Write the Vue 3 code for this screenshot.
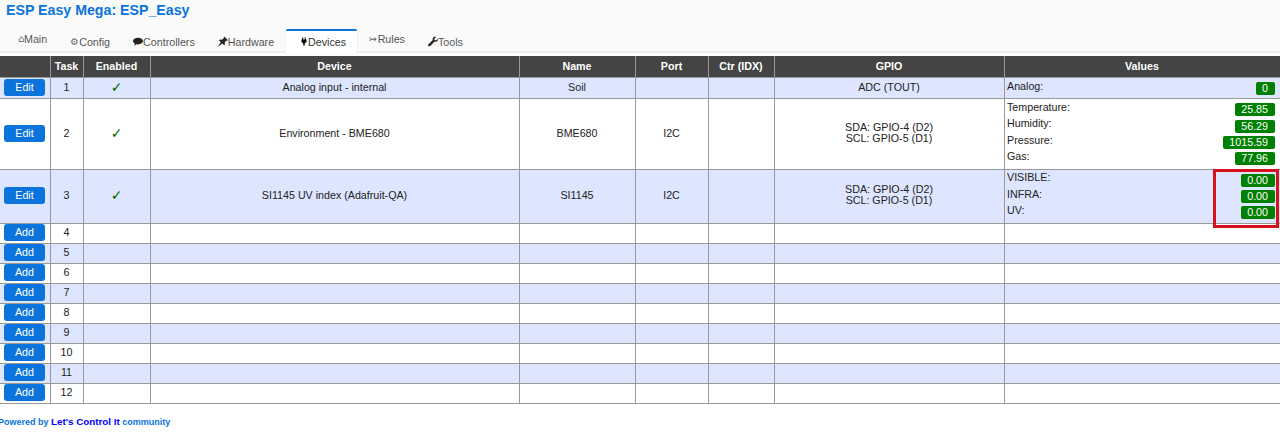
<template>
  <div class="page">
    <header class="top">
      <h1>ESP Easy Mega: ESP_Easy</h1>
      <nav class="tabs">
        <a
          v-for="tab in tabs"
          :key="tab.label"
          class="tab"
          :class="{ active: tab.label === 'Devices', lifted: tab.lifted }"
        >
          <span v-if="tab.glyph" class="glyph" :style="{ width: tab.w + 'px' }">{{ tab.glyph }}</span>
          <svg v-else class="icon" :style="{ width: tab.w + 'px' }" viewBox="0 0 16 16" aria-hidden="true">
            <path :d="tab.icon" />
          </svg>
          <span>{{ tab.label }}</span>
        </a>
      </nav>
    </header>

    <table class="devices">
      <colgroup>
        <col v-for="w in colWidths" :key="w.id" :style="{ width: w.px + 'px' }" />
      </colgroup>
      <thead>
        <tr>
          <th></th>
          <th>Task</th>
          <th>Enabled</th>
          <th>Device</th>
          <th>Name</th>
          <th>Port</th>
          <th>Ctr (IDX)</th>
          <th>GPIO</th>
          <th>Values</th>
        </tr>
      </thead>
      <tbody>
        <tr v-for="row in rows" :key="row.task">
          <td class="btn-cell">
            <button class="btn">{{ row.device ? 'Edit' : 'Add' }}</button>
          </td>
          <td>{{ row.task }}</td>
          <td><span v-if="row.device" class="check">✓</span></td>
          <td>{{ row.device }}</td>
          <td>{{ row.name }}</td>
          <td>{{ row.port }}</td>
          <td></td>
          <td>
            <div v-for="g in row.gpio" :key="g" class="gpio">{{ g }}</div>
          </td>
          <td class="values">
            <div v-if="row.values" class="value-list">
              <div v-for="v in row.values" :key="v[0]" class="value-row">
                <span class="value-name">{{ v[0] }}:</span>
                <span class="value-badge">{{ v[1] }}</span>
              </div>
            </div>
          </td>
        </tr>
      </tbody>
    </table>

    <footer class="foot">
      Powered by <b>Let's Control It</b> community
    </footer>

    <div class="highlight"></div>
  </div>
</template>

<script setup>
const tabs = [
  { label: 'Main', glyph: '⌂', w: 6, lifted: true },
  { label: 'Config', glyph: '⚙', w: 9 },
  { label: 'Controllers', w: 10, icon: 'M8 2c4.400 0 8 2.400 8 5.300s-3.600 5.300-8 5.300c-.8 0-1.500-.1-2.200-.2L2 14.500l1-3.200C1.100 10.400 0 8.900 0 7.300 0 4.400 3.600 2 8 2z' },
  { label: 'Hardware', w: 10, icon: 'M10 0l6 6-1.400.6-.9-.4-3 3 .5 3.400-1.400 1.400-3-3L.6 16l-.6-.6 4.600-6.200-3-3L3 4.800l3.400.5 3-3-.4-.9z' },
  { label: 'Devices', w: 8, icon: 'M4.500 0h2v4h3V0h2v4h1.500v5L9.500 11.500V16h-3v-4.500L3 9V4h1.500z' },
  { label: 'Rules', glyph: '↣', w: 9, lifted: true },
  { label: 'Tools', w: 10, icon: 'M16 3.500l-3 2.700-2.300-.5-.6-2.200L13 .6C10.800-.4 8.200.6 7.600 2.800c-.3 1-.2 1.900.1 2.700L.8 12.400c-1 1-1 2.100-.2 2.800.8.800 2 .7 2.900-.2l6.900-6.900c.8.300 1.700.4 2.700.1 2.200-.6 3.500-2.600 2.900-4.700z' },
]

const colWidths = [
  { id: 'btn', px: 50 },
  { id: 'task', px: 33 },
  { id: 'enabled', px: 67 },
  { id: 'device', px: 369 },
  { id: 'name', px: 116 },
  { id: 'port', px: 73 },
  { id: 'ctr', px: 66 },
  { id: 'gpio', px: 230 },
  { id: 'values', px: 276 },
]

const i2c = ['SDA: GPIO-4 (D2)', 'SCL: GPIO-5 (D1)']

const rows = [
  {
    task: 1,
    device: 'Analog input - internal',
    name: 'Soil',
    gpio: ['ADC (TOUT)'],
    values: [['Analog', '0']],
  },
  {
    task: 2,
    device: 'Environment - BME680',
    name: 'BME680',
    port: 'I2C',
    gpio: i2c,
    values: [
      ['Temperature', '25.85'],
      ['Humidity', '56.29'],
      ['Pressure', '1015.59'],
      ['Gas', '77.96'],
    ],
  },
  {
    task: 3,
    device: 'SI1145 UV index (Adafruit-QA)',
    name: 'SI1145',
    port: 'I2C',
    gpio: i2c,
    values: [
      ['VISIBLE', '0.00'],
      ['INFRA', '0.00'],
      ['UV', '0.00'],
    ],
  },
  ...[4, 5, 6, 7, 8, 9, 10, 11, 12].map((task) => ({ task })),
]
</script>

<style>
html,
body {
  margin: 0;
  background: #fff;
}
</style>

<style scoped>
.page {
  position: relative;
  width: 1280px;
  height: 433px;
  overflow: hidden;
  font-family: 'Liberation Sans', Arial, sans-serif;
  font-size: 10.7px;
  color: #222;
}

.top {
  background: #fafafa;
  height: 51px;
  border-bottom: 2px solid #eee;
}

h1 {
  margin: 0;
  padding: 2px 0 0 6px;
  font-size: 14.2px;
  line-height: 17px;
  font-weight: bold;
  color: #0a74dc;
}

.tabs {
  display: flex;
  align-items: flex-start;
  padding: 10px 0 0 6.500px;
}

.tab {
  display: flex;
  align-items: center;
  padding: 5.500px 11.500px 0;
  line-height: 14px;
  color: #555;
}

.tab.lifted {
  padding-top: 3.300px;
}

.tab.active {
  background: #fff;
  border-top: 2px solid #0a74dc;
  border-radius: 2px 2px 0 0;
  color: #333;
  padding: 3.500px 11px 5.500px 14px;
  box-shadow: 0 0 2px #ddd;
}

.tab.active .icon {
  margin-right: .5px;
  fill: #000;
}

.glyph {
  font-family: 'DejaVu Sans', sans-serif;
  font-size: 9.500px;
  color: #666;
}

.icon {
  height: 11px;
  flex: none;
  fill: #222;
}

.devices {
  table-layout: fixed;
  width: 1280px;
  border-collapse: collapse;
  margin-top: 3px;
}

th {
  background: #444;
  color: #fff;
  font-size: 10.7px;
  font-weight: bold;
  height: 19px;
  padding: 0 0 2px;
  border: 1px solid #999;
  border-top: none;
  text-align: center;
}

th:first-child,
td:first-child {
  border-left: none;
}

td {
  padding: 0 0 2px;
  height: 17px;
  border: 1px solid #999;
  text-align: center;
  font-size: 10.7px;
  color: #222;
}

tbody tr:nth-child(odd) {
  background: #dee6ff;
}

.btn-cell {
  padding: 0 4px 2px;
}

.btn {
  display: block;
  width: 41px;
  height: 17px;
  margin: 0;
  padding: 0;
  border: none;
  border-radius: 3px;
  background: #0a74dc;
  color: #fff;
  font: 10.7px 'Liberation Sans', Arial, sans-serif;
}

.check {
  color: #060;
  font-family: 'DejaVu Sans', sans-serif;
  font-size: 14px;
}

.gpio {
  line-height: 11px;
}

.values {
  text-align: left;
  vertical-align: top;
  padding: 0 5px 0 2.500px;
}

.value-list {
  padding: 1.500px 0 2.500px;
}

.value-row {
  display: flex;
  justify-content: space-between;
  height: 16.35px;
  line-height: 12px;
}

.value-badge {
  align-self: flex-end;
  height: 13px;
  margin-bottom: 1px;
  line-height: 13px;
  padding: 0 6.500px;
  border-radius: 2px;
  background: #008000;
  color: #fff;
  text-align: center;
}

.foot {
  margin-top: 12px;
  margin-left: -2px;
  font-size: 9px;
  line-height: 12px;
  font-weight: bold;
  color: #0a74dc;
}

.foot b {
  font-size: 9.800px;
  color: #00f;
}

.highlight {
  position: absolute;
  left: 1213px;
  top: 169px;
  width: 66px;
  height: 59px;
  box-sizing: border-box;
  border: 3px solid #d8121c;
  pointer-events: none;
}
</style>
